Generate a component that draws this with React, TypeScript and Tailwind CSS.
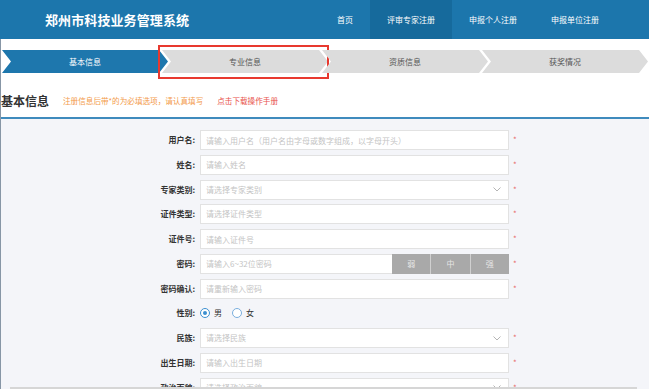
import React from "react";

const FONT = "font-['Noto_Sans_CJK_SC','Noto_Sans',sans-serif]";

function Chevron() {
  return (
    <svg width="8" height="5" viewBox="0 0 8 5" className="shrink-0">
      <path d="M0.5 0.5 L4 4 L7.5 0.5" fill="none" stroke="#b5b5b5" strokeWidth="1" />
    </svg>
  );
}

function Star() {
  return <span className="ml-[4px] text-[8px] leading-none text-[#e86a6a]">*</span>;
}

function Label({ text }: { text: string }) {
  return (
    <div className="w-[194px] shrink-0 text-right text-[8px] font-bold leading-none text-[#333]">
      {text}:
    </div>
  );
}

function InputRow({ label, ph }: { label: string; ph: string }) {
  return (
    <div className="flex h-[20px] shrink-0 items-center">
      <Label text={label} />
      <input
        readOnly
        placeholder={ph}
        className="ml-[5px] h-[20px] w-[309px] border border-[#e2e2e2] bg-white px-[5px] text-[8px] outline-none placeholder:text-[#c4c4c4]"
      />
      <Star />
    </div>
  );
}

function SelectRow({ label, ph }: { label: string; ph: string }) {
  return (
    <div className="flex h-[20px] shrink-0 items-center">
      <Label text={label} />
      <div className="ml-[5px] flex h-[20px] w-[309px] items-center justify-between border border-[#e2e2e2] bg-white pl-[5px] pr-[7px]">
        <span className="text-[8px] leading-none text-[#c4c4c4]">{ph}</span>
        <Chevron />
      </div>
      <Star />
    </div>
  );
}

function PlainSelectRow({ label, ph }: { label: string; ph: string }) {
  return (
    <div className="flex h-[20px] shrink-0 items-center">
      <Label text={label} />
      <div className="ml-[5px] flex h-[20px] w-[309px] items-center border border-[#e2e2e2] bg-white pl-[5px]">
        <span className="text-[8px] leading-none text-[#c4c4c4]">{ph}</span>
      </div>
      <Star />
    </div>
  );
}

export default function App() {
  return (
    <div className={`${FONT} flex h-[389px] w-[649px] flex-col overflow-hidden bg-white`}>
      {/* Header */}
      <header className="flex h-[39px] shrink-0 items-center bg-[#1c76ac]">
        <div className="ml-[45px] text-[13px] font-bold tracking-[0.1px] text-white">郑州市科技业务管理系统</div>
        <nav className="ml-auto mr-[33px] flex h-full text-[8px] text-white">
          <div className="flex h-full w-[50px] items-center justify-center">首页</div>
          <div className="flex h-full w-[82px] items-center justify-center bg-[#166a9c]">评审专家注册</div>
          <div className="flex h-full w-[82px] items-center justify-center">申报个人注册</div>
          <div className="flex h-full w-[82px] items-center justify-center">申报单位注册</div>
        </nav>
      </header>

      {/* Body */}
      <div className="flex min-h-0 flex-1 flex-col border-l border-[#8796a6]">
        {/* Steps */}
        <div className="mt-[11px] flex h-[23px] shrink-0 pl-[1px] text-[8px]">
          <div className="flex h-[23px] w-[166px] items-center justify-center bg-[#1e77ad] text-white [clip-path:polygon(0_0,157px_0,166px_50%,157px_100%,0_100%,9px_50%)]">
            基本信息
          </div>
          <div className="relative ml-[-6px]">
            <div className="flex h-[23px] w-[166px] items-center justify-center bg-[#dcdcdc] text-[#555] [clip-path:polygon(0_0,157px_0,166px_50%,157px_100%,0_100%,9px_50%)]">
              专业信息
            </div>
            <div className="absolute left-[-4px] top-[-5px] h-[34px] w-[171px] border-2 border-[#e8392f]" />
          </div>
          <div className="ml-[-6px] flex h-[23px] w-[166px] items-center justify-center bg-[#dcdcdc] text-[#555] [clip-path:polygon(0_0,157px_0,166px_50%,157px_100%,0_100%,9px_50%)]">
            资质信息
          </div>
          <div className="ml-[-6px] flex h-[23px] w-[166px] items-center justify-center bg-[#dcdcdc] text-[#555] [clip-path:polygon(0_0,157px_0,166px_50%,157px_100%,0_100%,9px_50%)]">
            获奖情况
          </div>
        </div>

        {/* Title row */}
        <div className="mt-[16px] flex h-[24px] shrink-0 items-center">
          <div className="text-[12px] font-bold leading-none text-[#333]">基本信息</div>
          <div className="ml-[14px] text-[7.6px] leading-none text-[#f39a4a]">注册信息后带*的为必填选项，请认真填写</div>
          <div className="ml-[14px] text-[7.6px] leading-none text-[#e8504a]">点击下载操作手册</div>
        </div>
        <div className="mt-[4px] h-[2px] shrink-0 bg-[#3f8bbd]" />

        {/* Form */}
        <div className="flex min-h-0 flex-1 flex-col gap-[4.75px] overflow-hidden bg-[#f4f5f9] pt-[11px]">
          <InputRow label="用户名" ph="请输入用户名（用户名由字母或数字组成，以字母开头）" />
          <InputRow label="姓名" ph="请输入姓名" />
          <SelectRow label="专家类别" ph="请选择专家类别" />
          <PlainSelectRow label="证件类型" ph="请选择证件类型" />
          <InputRow label="证件号" ph="请输入证件号" />
          <div className="flex h-[20px] shrink-0 items-center">
            <Label text="密码" />
            <div className="ml-[5px] flex h-[20px] w-[309px]">
              <input
                readOnly
                placeholder="请输入6~32位密码"
                className="h-[20px] w-[192px] border border-r-0 border-[#e2e2e2] bg-white px-[5px] text-[8px] outline-none placeholder:text-[#c4c4c4]"
              />
              <div className="flex h-[20px] flex-1 bg-[#a9a9a9] text-[8px] text-[#e6e6e6]">
                <div className="flex flex-1 items-center justify-center border-r border-[#d0d0d0]">弱</div>
                <div className="flex flex-1 items-center justify-center border-r border-[#d0d0d0]">中</div>
                <div className="flex flex-1 items-center justify-center">强</div>
              </div>
            </div>
            <Star />
          </div>
          <InputRow label="密码确认" ph="请重新输入密码" />
          <div className="flex h-[20px] shrink-0 items-center">
            <Label text="性别" />
            <div className="ml-[5px] flex items-center text-[8px] text-[#333]">
              <span className="flex h-[10px] w-[10px] items-center justify-center rounded-full border border-[#3c8fd0] bg-white">
                <span className="h-[4px] w-[4px] rounded-full bg-[#3c8fd0]" />
              </span>
              <span className="ml-[4px]">男</span>
              <span className="ml-[10px] h-[10px] w-[10px] rounded-full border border-[#7aaede] bg-white" />
              <span className="ml-[4px]">女</span>
            </div>
          </div>
          <SelectRow label="民族" ph="请选择民族" />
          <InputRow label="出生日期" ph="请输入出生日期" />
          <SelectRow label="政治面貌" ph="请选择政治面貌" />
        </div>
        <div className="flex h-[2px] shrink-0 bg-[#f4f5f9]">
          <div className="ml-[9px] h-[2px] w-[627px] bg-[#d6d6d6]" />
        </div>
      </div>
    </div>
  );
}
